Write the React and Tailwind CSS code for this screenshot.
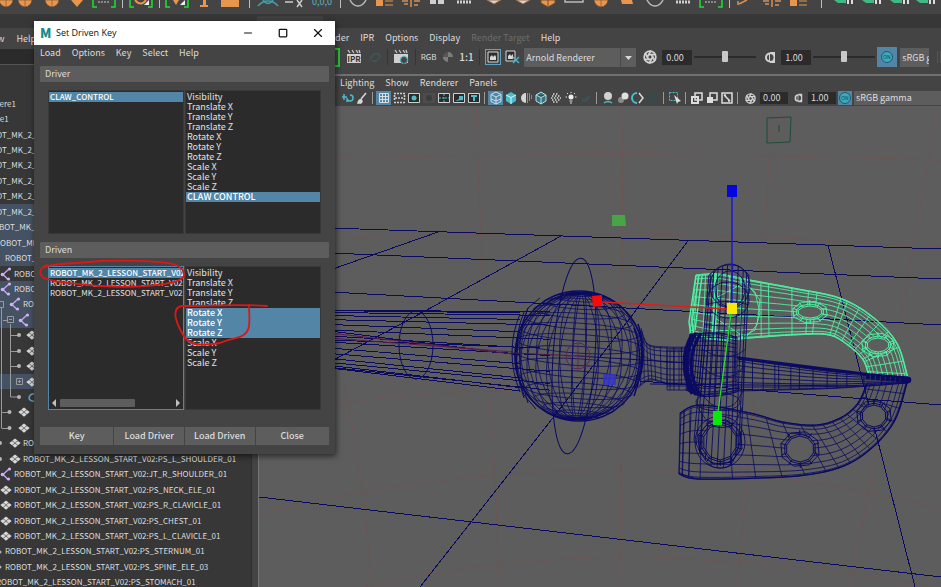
import React from 'react';
import { Aperture, X, Square, Minus } from 'lucide-react';

const attrs = ['Visibility', 'Translate X', 'Translate Y', 'Translate Z', 'Rotate X', 'Rotate Y', 'Rotate Z', 'Scale X', 'Scale Y', 'Scale Z'];

const prefix = 'ROBOT_MK_2_LESSON_START_V02:';

const outlinerRows = [
  { text: 'pSphere1', pad: '-ml-[20px]' },
  { text: 'Cube1', pad: '-ml-[15px]' },
  { text: 'ROBOT_MK_2_', pad: '-ml-[20px]' },
  { text: 'ROBOT_MK_2_', pad: '-ml-[20px]' },
  { text: 'ROBOT_MK_2_', pad: '-ml-[20px]' },
  { text: 'ROBOT_MK_2_', pad: '-ml-[20px]' },
  { text: 'ROBOT_MK_2_', pad: '-ml-[20px]' },
  { text: 'ROBOT_MK_2_', pad: '-ml-[20px]', on: true },
  { text: 'ROBOT_MK_', pad: '-ml-[12px]', on: true },
  { text: 'ROBOT_MK', pad: '-ml-[5px]', on: true },
  { text: 'ROBOT_', pad: 'pl-[5px]', on: true },
  { text: 'ROBOT', pad: 'pl-0', icon: 'joint' },
  { text: 'ROBOT', pad: 'pl-0', icon: 'joint', on: true },
  { text: 'ROB', pad: 'pl-[9px]', icon: 'joint', on: true },
  { text: '', pad: 'pl-[18px]', icon: 'joint', on: true },
  { text: '', pad: 'pl-[26px]', icon: 'mesh' },
  { text: '', pad: 'pl-[26px]', icon: 'mesh' },
  { text: '', pad: 'pl-[26px]', icon: 'mesh' },
  { text: '', pad: 'pl-[26px]', icon: 'mesh', on: true },
  { text: '', pad: 'pl-[26px]', icon: 'curve' },
  { text: '', pad: 'pl-[18px]', icon: 'mesh' },
  { text: '', pad: 'pl-[18px]', icon: 'mesh' },
  { text: 'ROB', pad: 'pl-[9px]', icon: 'mesh' },
  { text: prefix + 'PS_L_SHOULDER_01', pad: 'pl-[9px]', icon: 'mesh' },
  { text: prefix + 'JT_R_SHOULDER_01', pad: 'pl-0', icon: 'joint' },
  { text: prefix + 'PS_NECK_ELE_01', pad: 'pl-0', icon: 'mesh' },
  { text: prefix + 'PS_R_CLAVICLE_01', pad: 'pl-0', icon: 'mesh' },
  { text: prefix + 'PS_CHEST_01', pad: 'pl-0', icon: 'mesh' },
  { text: prefix + 'PS_L_CLAVICLE_01', pad: 'pl-0', icon: 'mesh' },
  { text: prefix + 'PS_STERNUM_01', pad: 'pl-[5px]' },
  { text: prefix + 'PS_SPINE_ELE_03', pad: 'pl-[5px]' },
  { text: prefix + 'PS_STOMACH_01', pad: '-ml-[4px]' },
];

function NodeIcon({ kind }) {
  if (kind === 'joint') {
    return (
      <svg width="12" height="14" viewBox="0 0 12 14" className="shrink-0">
        <path d="M9 2L3 7.5l5 5" fill="none" stroke="#c3a6ef" strokeWidth="1.4" />
        <circle cx="9.500" cy="2" r="1.600" fill="#cdb4f5" />
        <circle cx="2.500" cy="7.500" r="1.800" fill="#cdb4f5" />
        <circle cx="8.500" cy="12" r="1.600" fill="#cdb4f5" />
      </svg>
    );
  }
  if (kind === 'curve') {
    return (
      <svg width="12" height="14" viewBox="0 0 12 14" className="shrink-0">
        <path d="M10 4C5 3 3 6 3 8s3 4 8 3" fill="none" stroke="#5aa7c8" strokeWidth="1.5" />
      </svg>
    );
  }
  return (
    <svg width="12" height="14" viewBox="0 0 12 14" className="shrink-0">
      <path d="M6 2.500l2.700 2.100L6 6.700 3.300 4.600zM3 5l2.700 2.100L3 9.200.300 7.100zM9 5l2.700 2.100L9 9.200 6.300 7.100zM6 7.500l2.700 2.100L6 11.700 3.300 9.600z" fill="#d8d8d8" />
    </svg>
  );
}

function TreeLines() {
  return (
    <svg width="34" height="494" viewBox="0 96 34 494" className="absolute left-0 top-0 pointer-events-none">
      <g fill="none" stroke="#9a9a9a">
        <path d="M1.500 308v120M1.500 412.500h8M1.500 428.500h8M10.500 324v73h8M10.500 335.500h8M10.500 351.500h8M10.500 366.500h8M3 320.500h4" />
        <path d="M-2.500 301.500h6v6h-6zM7.500 316.500h6v6h-6zM16.500 378.500h6v6h-6zM9 319.500h3M18 381.500h3M19.500 380v3" />
      </g>
      <g fill="#b5b5b5">
        {[335, 351, 366, 397].map((y) => <circle key={y} cx="19" cy={y} r="2" />)}
        <circle cx="9.500" cy="412" r="2" />
        <circle cx="9.500" cy="428" r="2" />
        <circle cx="0" cy="443" r="2" />
        <circle cx="0" cy="459" r="2" />
        <circle cx="0" cy="567" r="1.500" />
        <circle cx="0" cy="552" r="1.500" />
      </g>
    </svg>
  );
}

function Outliner() {
  return (
    <aside className="w-[259px] shrink-0 flex bg-[#373737] overflow-hidden">
      <div className="flex-1 min-w-0 flex flex-col">
        <nav className="h-[21px] shrink-0 flex items-center gap-3 bg-[#444444] text-[9px] leading-[12px] -ml-[19px]">
          <a href="#show">Show</a>
          <a href="#help">Help</a>
        </nav>
        <div className="h-[15px] shrink-0 bg-[#2b2b2b]" />
        <div className="h-[32px] shrink-0 border-t border-[#555555] bg-[#373737]" />
        <div className="relative shrink-0">
          <ul className="grid auto-rows-fr h-[494px] text-[8px] leading-[14px] text-[#dedede]">
            {outlinerRows.map((row, i) => (
              <li key={i} className={row.on ? 'flex items-center bg-[#455263]' : 'flex items-center'}>
                <span className={'flex items-center gap-[2px] whitespace-nowrap ' + row.pad}>
                  {row.icon && <NodeIcon kind={row.icon} />}
                  {row.text}
                </span>
              </li>
            ))}
          </ul>
          <TreeLines />
        </div>
      </div>
      <div className="w-2 border-l border-[#2f2f2f] border-r border-r-[#777777] bg-[#444444]" />
    </aside>
  );
}

// shelf along the top edge, only the lower part of each icon is in view
const shelf = [
  ['w-[12px]', 'ball'], ['w-[26px]', 'ball'], ['w-[27px]', 'ball'], ['w-[24px]', 'diamond'],
  ['w-[30px]', 'bracket'], ['w-[7px]', 'sep'], ['w-[30px]', 'bracketBall'], ['w-[6px]', 'sep'],
  ['w-[30px]', 'bracketTri'], ['w-[24px]', 'tee'], ['w-[28px]', 'plate'], ['w-[11px]', 'sep'],
  ['w-[25px]', 'arc'], ['w-[27px]', 'cross'], ['w-[29px]', 'coords'], ['w-[8px]', 'sep'],
  ['w-[28px]', 'ring'], ['w-[26px]', 'align'], ['w-[26px]', 'split'], ['w-[26px]', 'blocks'],
  ['w-[28px]', 'dots'], ['w-[30px]', 'layers'], ['w-[28px]', 'layers'], ['w-[24px]', 'cube'],
  ['w-[28px]', 'frame'], ['w-[26px]', 'ball'], ['w-[26px]', 'sheet'], ['w-[30px]', 'ring'],
  ['w-[26px]', 'dots'], ['w-[30px]', 'bracket'], ['w-[6px]', 'sep'], ['w-[26px]', 'tri'],
  ['w-[28px]', 'split'], ['w-[26px]', 'align'], ['w-[18px]', 'sep'], ['w-[28px]', 'green'],
  ['w-[28px]', 'green'], ['w-[27px]', 'green'], ['w-[26px]', 'green'], ['w-[28px]', 'green'],
];

const shelfArt = {
  ball: <path d="M5 0h14q-1 6-7 7-6-1-7-7zM12 0v7" fill="#e8964e" stroke="#6b4a30" strokeWidth=".6" />,
  diamond: <path d="M6 0h12l-6 7z" fill="#e8964e" />,
  bracket: <g><path d="M1 0v7h4M23 0v7h-4" fill="none" stroke="#22dd35" strokeWidth="1.500" /><path d="M6 2h12" stroke="#cccccc" strokeDasharray="2 1" /></g>,
  bracketBall: <g><path d="M1 0v7h4M23 0v7h-4" fill="none" stroke="#22dd35" strokeWidth="1.500" /><path d="M6 0q6 7 11 0" fill="none" stroke="#e8964e" strokeWidth="2" /><path d="M20 0v5h-5z" fill="#eeeeee" /></g>,
  bracketTri: <g><path d="M1 0v7h4M23 0v7h-4" fill="none" stroke="#22dd35" strokeWidth="1.500" /><path d="M8 0l3 5 3-5z" fill="#e8964e" /><path d="M20 0v5h-5z" fill="#eeeeee" /></g>,
  tee: <path d="M11 0h3v5h2v2H8V5h3z" fill="#e8964e" />,
  plate: <path d="M3 0h18v7H3z" fill="#e8964e" />,
  arc: <path d="M2 6q4-5 10-5t10 5M7 0q5 7 10 0" fill="none" stroke="#3f9fa6" strokeWidth="1.500" />,
  cross: <path d="M3 2h8M15 0l5 7M20 0l-5 7" fill="none" stroke="#cccccc" strokeWidth="1.500" />,
  coords: <text x="2" y="5" fontSize="9" fill="#5cb8cc">0,0,0</text>,
  ring: <path d="M4 0q3 6 8 6t8-6" fill="none" stroke="#b9b9b9" strokeWidth="1.500" />,
  align: <g><path d="M3 0h7v6H3z" fill="#e8964e" /><path d="M12 1h8M12 5h8" stroke="#e8964e" /></g>,
  split: <path d="M3 1h6M15 1h6M5 4h4M15 5h4M12 0v7" stroke="#d89058" strokeWidth="1.500" />,
  blocks: <path d="M5 0h6v4H5zM13 0h6v4h-6z" fill="#cfcfcf" />,
  dots: <path d="M5 2h14" stroke="#cfcfcf" strokeWidth="3" strokeDasharray="2 1" />,
  layers: <path d="M6 0l7 4 7-4z" fill="#d5d5d5" stroke="#9b6b45" />,
  cube: <path d="M5 0v3l7 4 7-4V0zM12 0v7" fill="#e8964e" stroke="#75502f" />,
  sheet: <path d="M6 0h11l1 4H7z" fill="#e8964e" />,
  frame: <path d="M3 0v2h18V0" fill="none" stroke="#b9b9b9" strokeWidth="1.500" />,
  tri: <path d="M5 5V1M6 4l8-4" stroke="#d89058" strokeWidth="1.500" />,
  green: <g><path d="M2 0h12v3H6z" fill="#42b883" /><path d="M15 1h8M15 3h8" stroke="#dddddd" strokeWidth="2" strokeDasharray="2 2" /></g>,
};

function Shelf() {
  return (
    <div className="h-[14px] shrink-0 flex bg-[#444444] overflow-hidden">
      {shelf.map(([w, kind], i) =>
        kind === 'sep' ? (
          <span key={i} className={'shrink-0 flex justify-center ' + w}>
            <i className="w-px h-2 bg-[#bdbdbd]" />
          </span>
        ) : (
          <button key={i} type="button" aria-label={kind} className={'shrink-0 flex justify-center ' + w}>
            <svg width="24" height="8" viewBox="0 0 24 8" className="shrink-0">{shelfArt[kind]}</svg>
          </button>
        )
      )}
    </div>
  );
}

function Clapper({ children }) {
  return (
    <svg width="16" height="16" viewBox="0 0 16 16">
      <path d="M2 1l2 3M6 1l2 3M10 1l2 3M13 1l1 3" stroke="#c8c8c8" strokeWidth="1.300" />
      <path d="M1 5h14v9H1z" fill="#d0d0d0" />
      {children}
    </svg>
  );
}

function Slider({ label }) {
  return (
    <input
      type="range"
      aria-label={label}
      defaultValue="50"
      className="w-[62px] h-4 appearance-none bg-transparent [&::-webkit-slider-runnable-track]:h-[2px] [&::-webkit-slider-runnable-track]:bg-[#2b2b2b] [&::-webkit-slider-thumb]:appearance-none [&::-webkit-slider-thumb]:w-[6px] [&::-webkit-slider-thumb]:h-[11px] [&::-webkit-slider-thumb]:-mt-[5px] [&::-webkit-slider-thumb]:bg-[#c8c8c8] [&::-webkit-slider-thumb]:rounded-[1px]"
    />
  );
}

function ColorManaged({ size }) {
  return (
    <svg width={size} height={size} viewBox="0 0 14 14">
      <circle cx="7" cy="7" r="5.500" fill="#41a9b5" stroke="#1d5a70" />
      <text x="7" y="9" fontSize="5" textAnchor="middle" fill="#123f50">ON</text>
    </svg>
  );
}

function HalfDisc({ size }) {
  return (
    <svg width={size} height={size} viewBox="0 0 13 13" className="shrink-0">
      <path d="M7 1h5v11H7z" fill="#d2d2d2" />
      <path d="M7 2.500a4 4 0 0 0 0 8z" fill="none" stroke="#d2d2d2" strokeWidth="2" />
      <path d="M7 3a3.500 3.500 0 0 1 0 7z" fill="#444444" />
    </svg>
  );
}

function Sep() {
  return <span className="w-px h-4 bg-[#353535]" />;
}

function RenderView() {
  return (
    <div className="shrink-0 h-[48px] flex flex-col border-b-2 border-[#707070]">
      <nav className="h-[19px] shrink-0 flex items-center gap-[11px] pl-[60px] text-[9px] leading-[12px]">
        <a href="#render">Render</a>
        <a href="#ipr">IPR</a>
        <a href="#options">Options</a>
        <a href="#display">Display</a>
        <a href="#target" className="text-[#6c6c6c]">Render Target</a>
        <a href="#rhelp">Help</a>
      </nav>
      <div className="flex items-center h-[20px] pl-[75px]">
        <span className="w-[7px] h-[19px] border-2 border-l-0 border-[#22cc33]" />
        <div className="flex items-center w-[183px] justify-between pl-[6px]">
          <button type="button" aria-label="IPR render"><Clapper><text x="8" y="13" fontSize="8" fontWeight="bold" textAnchor="middle" fill="#333333">IPR</text></Clapper></button>
          <button type="button" aria-label="Refresh IPR">
            <svg width="14" height="14" viewBox="0 0 14 14"><path d="M2 10q3-8 8-6t-2 7M4 11h5" fill="none" stroke="#3d5354" strokeWidth="2" /></svg>
          </button>
          <Sep />
          <button type="button" aria-label="Render settings">
            <Clapper><circle cx="11" cy="11" r="3.500" fill="#444444" stroke="#3fb0bf" strokeWidth="1.500" strokeDasharray="2 1" /></Clapper>
          </button>
          <Sep />
          <button type="button" className="text-[8px] leading-[10px]">RGB</button>
          <button type="button" aria-label="Alpha">
            <svg width="12" height="12" viewBox="0 0 12 12"><path d="M6 1a5 5 0 0 1 5 5H6zM6 6v5a5 5 0 0 1-5-5z" fill="#7d7d7d" /><path d="M6 1v5H1a5 5 0 0 1 5-5z" fill="#555555" /></svg>
          </button>
          <button type="button" className="text-[10px] leading-[12px] font-medium">1:1</button>
          <Sep />
          <button type="button" aria-label="Keep image" className="border border-[#5ba5c0] p-px">
            <svg width="12" height="12" viewBox="0 0 12 12"><path d="M1 1h10v10H1z" fill="#2d2d2d" stroke="#d8d8d8" /><path d="M3 9V6l2-2 1 2 2-2 1 2v3z" fill="#d8d8d8" /></svg>
          </button>
        </div>
        <button type="button" aria-label="Remove image" className="mx-[4px]">
          <svg width="15" height="14" viewBox="0 0 15 14"><path d="M1 1h9v10H1z" fill="#2d2d2d" stroke="#d8d8d8" /><path d="M3 9V6l2-2 1 2 2-2v5z" fill="#d8d8d8" /><path d="M8 7l6 6M14 7l-6 6" stroke="#45b3c4" strokeWidth="1.500" /></svg>
        </button>
        <div className="relative w-[112px] h-[19px] shrink-0">
          <select aria-label="Renderer" className="block appearance-none w-full h-full bg-[#5d5d5d] px-[2px] text-[9px] leading-[19px]">
            <option>Arnold Renderer</option>
          </select>
          <svg width="16" height="19" viewBox="0 0 16 19" className="absolute right-0 top-0 pointer-events-none"><path d="M.5 0v19" stroke="#4a4a4a" /><path d="M5 8h7l-3.500 4z" fill="#d8d8d8" /></svg>
        </div>
        <Aperture size={14} className="ml-[7px] shrink-0 text-[#d2d2d2]" strokeWidth={3} />
        <input aria-label="Exposure" defaultValue="0.00" className="w-[30px] h-[15px] ml-[5px] pl-[4px] bg-[#2b2b2b] text-[9px] leading-[15px]" />
        <span className="mx-[2px] flex"><Slider label="Exposure slider" /></span>
        <span className="ml-[5px]"><HalfDisc size={13} /></span>
        <input aria-label="Gamma" defaultValue="1.00" className="w-[30px] h-[15px] ml-[5px] pl-[4px] bg-[#2b2b2b] text-[9px] leading-[15px]" />
        <span className="mx-[2px] flex"><Slider label="Gamma slider" /></span>
        <button type="button" aria-label="Color management" className="w-5 h-5 shrink-0 bg-[#5285a6] flex items-center justify-center"><ColorManaged size={14} /></button>
        <input aria-label="View transform" defaultValue="sRGB gamma" className="w-[29px] h-[19px] ml-[3px] pl-[2px] bg-[#5d5d5d] text-[9px] leading-[19px]" />
        <span className="ml-2 h-3 w-1 border-x border-[#555555]" />
      </div>
    </div>
  );
}

const teal = '#4bbccb';

const tools = [
  { n: 'Pan', art: <path d="M2 6h5M4 3v6M7 7a3 3 0 1 0 3-3M6 10h4" fill="none" stroke={teal} strokeWidth="1.500" /> },
  { n: 'Grease pencil', art: <path d="M11 2L6 8M3 12q1-4 3-3t0 3z" stroke="#d8d8d8" strokeWidth="1.500" fill="#d8d8d8" /> },
  'sep',
  { n: 'Grid', on: true, art: <path d="M2.500 2.500h9v9h-9zM5.500 2v10M8.500 2v10M2 5.500h10M2 8.500h10" fill="none" stroke="#dddddd" /> },
  { n: 'Film gate', art: <path d="M2 2.500h11M2 11.500h11M2.500 4v6M12.500 4v6M3 7h9" fill="none" stroke="#d0d0d0" strokeWidth="1.500" strokeDasharray="2 1" /> },
  { n: 'Resolution gate', art: <g><path d="M1.500 2.500h11v9h-11z" fill="#2b2b2b" stroke="#d0d0d0" /><circle cx="7" cy="7" r="2.500" fill={teal} /></g> },
  { n: 'Gate mask', art: <g><path d="M1 2h12v10H1z" fill="#4c4c4c" /><circle cx="7" cy="7" r="3" fill="#3c3c3c" /></g> },
  { n: 'Field chart', art: <g><path d="M1.500 2.500h11v9h-11z" fill="#2b2b2b" stroke="#d0d0d0" /><path d="M7 3v8M2 7h10" stroke={teal} strokeDasharray="2 1" /></g> },
  { n: 'Safe action', art: <g><path d="M1.500 2.500h11v9h-11z" fill="#2b2b2b" stroke="#d0d0d0" /><path d="M3 10l4-2V5h4v4z" fill={teal} /></g> },
  { n: 'Safe title', art: <g><path d="M1.500 2.500h11v9h-11z" fill="#2b2b2b" stroke="#d0d0d0" /><path d="M4 5h6M7 5v5" stroke={teal} strokeWidth="2" /></g> },
  'sep',
  { n: 'Wireframe', on: true, art: <path d="M7 1l5 2.500v7L7 13l-5-2.500v-7zM2 3.500L7 6l5-2.500M7 6v7M2 8l5 2 5-2" fill="none" stroke="#c8e4ee" /> },
  { n: 'Shaded', art: <g><path d="M7 1l5 3v6l-5 3-5-3V4z" fill={teal} /><path d="M2 4l5 2.500L12 4M7 6.500V13" fill="none" stroke="#d8f5f8" /></g> },
  { n: 'Default material', art: <g><path d="M7 2a5 5 0 0 0 0 10z" fill="#d5d5d5" /><path d="M8 3h4M8 5h5M8 7h5M8 9h4M8 11h2" stroke="#d5d5d5" strokeDasharray="1 1" /></g> },
  { n: 'Wireframe on shaded', art: <path d="M7 1l5 3v6l-5 3-5-3V4zM2 4l5 2.500L12 4M7 6.500V13" fill="#327580" stroke="#b8dfe4" /> },
  { n: 'Textured', art: <path d="M4 3h6M3 5h8M2 7h10M3 9h8M4 11h6" stroke="#d5d5d5" strokeWidth="1.500" strokeDasharray="1.500 1.500" /> },
  { n: 'Lights', art: <g><circle cx="7" cy="6" r="2.500" fill="#eeeeee" /><path d="M5.500 10h3M6 12h2M7 1v1M1.500 6H3M11 6h1.500M3 2l1 1M11 2l-1 1" stroke="#dddddd" /></g> },
  { n: 'Shadows', art: <path d="M3 9q4 2 7-4" fill="none" stroke="#355556" strokeWidth="3" /> },
  'sep',
  { n: 'Occlusion', art: <g><circle cx="7" cy="5" r="4" fill="#d0d0d0" /><path d="M3 12q4-3 8 0" stroke={teal} fill="none" strokeWidth="1.500" /></g> },
  { n: 'Motion blur', art: <g><circle cx="5" cy="9" r="3" fill="#8a8a8a" /><circle cx="9" cy="5" r="3.500" fill="#e0e0e0" /></g> },
  { n: 'Multisample', art: <g><path d="M6 2a5 5 0 0 0 0 10" fill="none" stroke={teal} strokeWidth="2" /><path d="M8 2l4 5-4 5" fill="none" stroke="#dddddd" strokeWidth="1.500" /></g> },
  { n: 'Depth of field', art: <path d="M2 2h10v10H2z" fill="#39494a" /> },
  'sep',
  { n: 'Isolate', art: <g><path d="M1.500 1.500h8v8h-8z" fill="none" stroke={teal} strokeDasharray="2 1" /><path d="M6 4l7 6-3 1-1 2z" fill="#e0e0e0" /></g> },
  'sep',
  { n: 'X-ray', art: <g><path d="M5 2h7v7H5z" fill="#444444" stroke="#dddddd" strokeWidth="1.500" /><path d="M2 6h6v6H2z" fill="none" stroke="#dddddd" strokeWidth="2" /></g> },
  { n: 'X-ray joints', art: <g><path d="M5 2h7v7H5z" fill="#444444" stroke="#dddddd" strokeWidth="1.500" /><path d="M2 6h6v6H2z" fill="#dddddd" /></g> },
  { n: 'X-ray components', art: <path d="M2 2h10v10H2zM4 4l6 6M4 4h2M10 10H8" fill="none" stroke="#dddddd" strokeWidth="1.500" /> },
  'sep',
];

function ViewportTools() {
  return (
    <div className="h-[16px] shrink-0 flex items-center pl-[80px]">
      {tools.map((t, i) =>
        t === 'sep' ? (
          <span key={i} className="w-[7px] shrink-0 flex justify-center"><i className="w-px h-3 bg-[#999999]" /></span>
        ) : (
          <button key={i} type="button" aria-label={t.n} className={t.on ? 'w-[15px] shrink-0 flex justify-center bg-[#5285a6]' : 'w-[15px] shrink-0 flex justify-center'}>
            <svg width="14" height="14" viewBox="0 0 14 14">{t.art}</svg>
          </button>
        )
      )}
      <Aperture size={11} className="ml-[4px] shrink-0 text-[#d2d2d2]" strokeWidth={3} />
      <input aria-label="View exposure" defaultValue="0.00" className="w-[28px] h-[12px] ml-[4px] pl-[3px] bg-[#2b2b2b] text-[9px] leading-[12px]" />
      <span className="ml-[5px]"><HalfDisc size={10} /></span>
      <input aria-label="View gamma" defaultValue="1.00" className="w-[28px] h-[12px] ml-[5px] pl-[3px] bg-[#2b2b2b] text-[9px] leading-[12px]" />
      <button type="button" aria-label="View color management" className="w-[14px] h-[14px] ml-[2px] shrink-0 bg-[#5285a6]"><ColorManaged size={14} /></button>
      <input aria-label="View color space" defaultValue="sRGB gamma" className="flex-1 min-w-0 h-[14px] ml-[2px] pl-[2px] bg-[#5d5d5d] text-[9px] leading-[14px]" />
    </div>
  );
}

// ---- wireframe helpers ----

function sample(pts, n) {
  const out = [];
  const last = pts.length - 1;
  for (let k = 0; k <= n; k++) {
    const u = (k / n) * last;
    const i = Math.min(Math.floor(u), last - 1);
    const t = u - i;
    const p0 = pts[Math.max(i - 1, 0)];
    const p1 = pts[i];
    const p2 = pts[i + 1];
    const p3 = pts[Math.min(i + 2, last)];
    out.push([0, 1].map((a) =>
      0.5 * (2 * p1[a] + (p2[a] - p0[a]) * t + (2 * p0[a] - 5 * p1[a] + 4 * p2[a] - p3[a]) * t * t + (3 * p1[a] - p0[a] - 3 * p2[a] + p3[a]) * t * t * t)
    ));
  }
  return out;
}

const toPath = (pts) => 'M' + pts.map((p) => p[0].toFixed(1) + ' ' + p[1].toFixed(1)).join('L');

function mesh(top, bottom, rows, cols, n = 40) {
  const a = sample(top, n);
  const b = sample(bottom, n);
  const at = (i, t) => [a[i][0] + (b[i][0] - a[i][0]) * t, a[i][1] + (b[i][1] - a[i][1]) * t];
  let d = '';
  rows.forEach((t) => { d += toPath(a.map((_, i) => at(i, t))); });
  cols.forEach((c) => { d += toPath([at(c, 0), at(c, 1)]); });
  return d;
}

function polygon(cx, cy, rx, ry, n) {
  const pts = [];
  for (let i = 0; i <= n; i++) {
    const a = (i / n) * Math.PI * 2 + 0.3;
    pts.push([cx + rx * Math.cos(a), cy + ry * Math.sin(a)]);
  }
  return toPath(pts);
}

function Hole({ cx, cy, rx, ry, color }) {
  let d = polygon(cx, cy, rx, ry, 10) + polygon(cx, cy, rx + 2, ry + 2, 10) + polygon(cx, cy, rx + 6, ry + 5, 8);
  for (let i = 0; i < 10; i++) {
    const a = (i / 10) * Math.PI * 2 + 0.3;
    d += toPath([[cx + rx * Math.cos(a), cy + ry * Math.sin(a)], [cx + (rx + 6) * Math.cos(a), cy + (ry + 6) * Math.sin(a)]]);
  }
  return <g><path d={polygon(cx, cy, rx + 1, ry + 1, 10)} fill="#5d5d5d" /><path d={d} fill="none" stroke={color} /></g>;
}

function armLines() {
  let d = '';
  for (let i = 0; i <= 15; i++) {
    const t = (1 - Math.cos((i / 15) * Math.PI)) / 2;
    d += toPath([[330, 310 + t * 58], [i % 2 ? 520 : 550, 312 + t * 79]]);
  }
  d += 'M330 331L520 355M330 340L540 348';
  return d;
}

function ballLines() {
  const [cx, cy, r] = [579, 356, 64];
  let d = '';
  for (let i = 0; i < 15; i++) {
    const lon = (i / 15) * Math.PI;
    const pts = [];
    for (let k = 0; k <= 36; k++) {
      const a = (k / 36) * Math.PI * 2;
      const x = Math.sin(a) * Math.cos(lon);
      const z = Math.sin(a) * Math.sin(lon);
      const y = Math.cos(a) * 0.98 + z * 0.2;
      pts.push([cx + r * (x + y * -0.04), cy + r * y]);
    }
    d += toPath(pts);
  }
  for (let i = 1; i < 16; i++) {
    const lat = (i / 16) * Math.PI;
    const pts = [];
    for (let k = 0; k <= 36; k++) {
      const a = (k / 36) * Math.PI * 2;
      const x = Math.sin(lat) * Math.cos(a);
      const y = Math.cos(lat) * 0.98 + Math.sin(lat) * Math.sin(a) * 0.15;
      pts.push([cx + r * x, cy + r * y + x * 4]);
    }
    d += toPath(pts);
  }
  return d;
}

const ts = (n) => Array.from({ length: n + 1 }, (_, i) => (1 - Math.cos((i / n) * Math.PI)) / 2);

const clawTop = [[696, 275], [718, 274], [750, 280], [793, 288], [840, 298], [873, 317], [897, 343], [908, 378]];
const clawTopIn = [[690, 334], [718, 340], [750, 338], [793, 335], [829, 335], [850, 347], [863, 360], [868, 373]];
const clawLow = [[679, 474], [698, 479], [760, 478], [806, 475], [844, 466], [873, 447], [895, 420], [907, 383]];
const clawLowIn = [[680, 413], [700, 405], [750, 413], [783, 422], [817, 425], [842, 417], [858, 403], [867, 383]];

function Scene() {
  const navy = '#0a0a62';
  const green = '#4df2a4';
  return (
    <svg width="100%" height="100%" viewBox="259 106 682 481" preserveAspectRatio="xMinYMin slice" className="block">
      <g fill="none" stroke="#6c5656" strokeWidth="1">
        <path d="M336 158Q630 150 941 160M336 240Q600 224 941 247M336 404Q420 392 520 390M259 514Q430 472 620 469Q800 470 941 510M365 587Q480 560 620 557Q800 560 941 590" />
        <path d="M476 106Q482 300 495 470L499 587M623 106L622 300L620 587M772 106Q760 350 738 587M938 106L911 260Q880 440 850 587M345 383L364 500L372 587" />
      </g>
      <g fill="none" stroke={navy} shapeRendering="crispEdges">
        <path d="M330 228L941 249M330 253L941 279M330 292L941 325M640 381L941 405M259 497L941 577" />
        <path d="M438 232L330 270M561 236L425 311L330 362M688 241L634 313L552 419L420 587M828 245L915 587" />
        <path d={armLines()} />
      </g>
      <g fill="none" stroke={navy}>
        <ellipse cx="416" cy="345" rx="17" ry="34" />
        <ellipse cx="574" cy="356" rx="21" ry="98" transform="rotate(4 574 356)" />
      </g>
      <path d="M330 338L513 352M330 333L513 354" stroke="#5a1f4c" fill="none" />
      <g fill="none" stroke={navy}>
        <path d={ballLines()} strokeWidth=".8" />
        <ellipse cx="579" cy="356" rx="64" ry="65" strokeWidth="1.500" />
        <path d="M520 314Q504 352 520 392M524 312Q508 352 524 398M528 308Q511 352 528 403M540 298L528 308L518 335L516 370L524 395L536 409" />
        <path d="M634 328Q645 355 634 388M638 324Q649 355 634 396" strokeWidth="1.500" />
        <path d={mesh([[641, 328], [648, 344], [668, 347], [690, 347]], [[638, 388], [650, 380], [668, 384], [690, 384]], ts(9), [4, 8, 12, 15, 18, 22, 26, 30, 34, 38])} strokeWidth=".8" />
        <path d="M667 350h24v40h-24zM670 350v40M674 350v40M679 350v40M667 386h24" strokeWidth=".8" />
      </g>
      <path d="M513 353L578 356" stroke="#4b1748" />
      <path d="M578 356L690 363M650 384L860 386" stroke={navy} />
      <ellipse cx="578" cy="356" rx="12" ry="13" fill="none" stroke="#5a2452" />
      <path d="M567 356h22M578 344v25" stroke="#5a2452" />

      <g fill="none" stroke={green} strokeWidth=".9">
        <path d={mesh(clawTop, clawTopIn, ts(12), [0, 1, 3, 5, 8, 10, 13, 14, 17, 19, 20, 23, 24, 26, 28, 30, 32, 34, 35, 37, 39, 40])} />
        <path d="M696 275L689 322L691 336M699 275L692 322L694 338M716 274L712 338M718 273L715 338M702 276L695 330" strokeWidth="1.500" />
        <path d="M740 280L755 292L760 313L755 330L740 338M745 281L760 300L757 325L745 338M715 318L740 334M712 300L740 285" />
        <path d={toPath(sample(clawTop, 40))} />
        <path d={toPath(sample(clawTopIn, 40))} />
      </g>
      <Hole cx={810} cy={312} rx={12} ry={6} color={green} />
      <Hole cx={878} cy={345} rx={11} ry={7} color={green} />

      <g fill="none" stroke={navy} strokeWidth=".8">
        <path d={mesh(clawLow, clawLowIn, ts(10), [0, 2, 4, 6, 9, 11, 14, 17, 20, 22, 24, 26, 28, 30, 32, 34, 36, 38, 40])} />
        <path d={toPath(sample(clawLow, 40))} strokeWidth="1.300" />
        <path d={toPath(sample(clawLowIn, 40))} strokeWidth="1.200" />
        <path d="M681 413L679 474L698 479M684 411L682 474M690 410L689 475" />
      </g>
      <Hole cx={800} cy={449} rx={14} ry={13} color={navy} />
      <Hole cx={874} cy={416} rx={12} ry={11} color={navy} />
      <Hole cx={720} cy={442} rx={17} ry={18} color={navy} />

      <g fill="none" stroke={navy} strokeWidth=".9">
        <ellipse cx="730" cy="286" rx="20" ry="22" />
        <ellipse cx="730" cy="289" rx="15" ry="18" />
        <ellipse cx="728" cy="300" rx="21" ry="18" />
        <path d={mesh([[709, 275], [722, 266], [738, 266], [749, 275]], [[694, 440], [710, 465], [730, 465], [741, 440]], [0, .18, .3, .45, .55, .7, .8, 1], [0, 3, 6, 10, 14, 18, 22, 27, 32, 36, 40])} />
        <path d={mesh([[690, 334], [705, 333], [720, 333], [737, 337]], [[686, 390], [700, 396], [718, 396], [737, 392]], ts(17), [0, 2, 4, 6, 8, 10, 12, 14, 17, 20, 24, 28, 32, 36, 38, 40])} />
        <path d="M692 334Q676 362 692 394M696 333Q678 362 696 395M701 333Q682 362 700 396" strokeWidth="3" />
        <ellipse cx="720" cy="442" rx="21" ry="22" />
        <ellipse cx="720" cy="442" rx="25" ry="26" />
        <ellipse cx="718" cy="402" rx="22" ry="9" />
        <path d={mesh([[737, 357], [780, 364], [840, 372], [908, 377]], [[737, 391], [780, 390], [840, 388], [908, 383]], ts(9), [3, 6, 9, 12, 13, 16, 18, 21, 24, 26, 28, 31, 34, 37])} />
        <path d="M737 357L870 374L910 378M738 359L870 375" strokeWidth="1.500" />
        <path d="M866 376L908 380" strokeWidth="6" strokeDasharray="4 1" />
        <circle cx="908" cy="380" r="3" fill={navy} />
      </g>

      <path d="M767 118l24-1-1 25-23 1z" fill="none" stroke="#1e4c38" />
      <path d="M779 125v7" stroke="#1e4c38" />
      <path d="M612 215h13l1 11h-14z" fill="#47a447" />
      <path d="M603 374h13v11h-13z" fill="#3434d0" opacity=".8" />
      <path d="M732 197v107" stroke="#1818d8" strokeWidth="1.500" />
      <path d="M727 185h10v12h-10z" fill="#0505dd" />
      <path d="M602 302L727 309" stroke="#e01d1d" strokeWidth="1.300" />
      <path d="M592 296l10-1v11l-9 1z" fill="#fb0808" />
      <path d="M731 314L718 412" stroke="#22e022" strokeWidth="1.300" />
      <path d="M727 303h10v11h-10z" fill="#f5e808" />
      <path d="M713 411h9v14h-9z" fill="#08e808" />
    </svg>
  );
}

function Listbox({ label, items, selected, focused, nodes }) {
  return (
    <div className={'flex-1 min-w-0 flex flex-col bg-[#2b2b2b] border ' + (focused ? 'border-[#5285a6]' : 'border-[#383838]')}>
      <ul role="listbox" aria-label={label} className={'flex-1 pt-px overflow-hidden leading-[10px] text-[#e2e2e2] ' + (nodes ? 'text-[8px]' : 'text-[9px]')}>
        {items.map((item, i) => {
          const on = selected.includes(i);
          return (
            <li key={i} role="option" aria-selected={on} className={'h-[10px] pl-px whitespace-nowrap ' + (on ? 'bg-[#5285a6] text-white font-medium' : '')}>
              {item}
            </li>
          );
        })}
      </ul>
      {focused && (
        <div className="h-[10px] mb-px flex items-center justify-between px-[2px]">
          <svg width="6" height="8" viewBox="0 0 6 8"><path d="M5 0v8L1 4z" fill="#c0c0c0" /></svg>
          <span className="flex-1 mx-[3px]"><i className="block w-2/3 h-2 bg-[#5d5d5d] rounded-[1px]" /></span>
          <svg width="6" height="8" viewBox="0 0 6 8"><path d="M1 0v8l4-4z" fill="#c0c0c0" /></svg>
        </div>
      )}
    </div>
  );
}

function Section({ title, children }) {
  return (
    <section>
      <h2 className="h-[16px] px-[5px] bg-[#5d5d5d] rounded-[1px] text-[9px] leading-[16px]">{title}</h2>
      <div className="flex gap-px h-[144px] mt-2 mx-2">{children}</div>
    </section>
  );
}

function DrivenKeyDialog() {
  const node = 'ROBOT_MK_2_LESSON_START_V02:';
  return (
    <div role="dialog" aria-label="Set Driven Key" className="absolute left-[34px] top-[21px] w-[301px] bg-[#444444] shadow-[1px_2px_6px_rgba(0,0,0,0.6)]">
      <header className="h-[24px] flex items-center bg-white text-[#111111]">
        <span className="ml-[6px] w-3 text-[13px] leading-[14px] font-black text-[#168a8c]">M</span>
        <h1 className="ml-[4px] flex-1 text-[9px] leading-[14px] font-['Open_Sans',sans-serif]">Set Driven Key</h1>
        <button type="button" aria-label="Minimize" className="w-[35px] flex justify-center"><Minus size={12} strokeWidth={2} /></button>
        <button type="button" aria-label="Maximize" className="w-[35px] flex justify-center"><Square size={10} strokeWidth={3} /></button>
        <button type="button" aria-label="Close window" className="w-[35px] flex justify-center"><X size={14} strokeWidth={2} /></button>
      </header>
      <nav className="h-[16px] flex items-center gap-[11px] px-[6px] text-[9px] leading-[14px]">
        <a href="#load">Load</a>
        <a href="#opts">Options</a>
        <a href="#key">Key</a>
        <a href="#select">Select</a>
        <a href="#dhelp">Help</a>
      </nav>
      <div className="px-[6px] pt-[5px] pb-[9px] flex flex-col gap-2">
        <Section title="Driver">
          <Listbox label="Driver nodes" items={['CLAW_CONTROL']} selected={[0]} nodes />
          <Listbox label="Driver attributes" items={[...attrs, 'CLAW CONTROL']} selected={[10]} />
        </Section>
        <Section title="Driven">
          <Listbox label="Driven nodes" items={[node, node, node]} selected={[0]} focused nodes />
          <Listbox label="Driven attributes" items={attrs} selected={[4, 5, 6]} />
        </Section>
        <div className="grid grid-cols-[74fr_70fr_70fr_74fr] gap-px mt-[9px] text-[9px] leading-[18px] font-medium">
          <button type="button" className="h-[18px] bg-[#5d5d5d]">Key</button>
          <button type="button" className="h-[18px] bg-[#5d5d5d]">Load Driver</button>
          <button type="button" className="h-[18px] bg-[#5d5d5d]">Load Driven</button>
          <button type="button" className="h-[18px] bg-[#5d5d5d]">Close</button>
        </div>
      </div>
      <svg width="301" height="433" viewBox="34 21 301 433" className="absolute left-0 top-0 pointer-events-none">
        <g fill="none" stroke="#dd1717" strokeWidth="1.800" strokeLinecap="round">
          <path d="M44 267C60 262 80 264 100 261C130 260 165 261 176 265C184 269 187 275 181 279C170 286 130 288 100 286C75 284 52 282 44 278C38 274 39 268 47 265" />
          <path d="M267 306C240 304 210 306 182 306C170 308 177 324 182 333C188 346 200 346 220 343C232 337 247 340 249 326C250 318 249 312 249 305" />
        </g>
      </svg>
    </div>
  );
}

export default function App() {
  return (
    <div className="relative h-screen w-full flex flex-col overflow-hidden bg-[#373737] text-[#dcdcdc] font-['Noto_Sans_CJK_SC',sans-serif]">
      <Shelf />
      <div className="h-[14px] shrink-0 flex items-end bg-[#373737]">
        <span className="ml-[257px] w-[66px] h-3 bg-[#404040]" />
      </div>
      <div className="flex-1 min-h-0 flex">
        <Outliner />
        <main className="flex-1 min-w-0 flex flex-col bg-[#444444] overflow-hidden">
          <RenderView />
          <nav className="h-[14px] shrink-0 flex items-center gap-[11px] pl-[81px] text-[9px] leading-[14px]">
            <a href="#lighting">Lighting</a>
            <a href="#vshow">Show</a>
            <a href="#vrenderer">Renderer</a>
            <a href="#panels">Panels</a>
          </nav>
          <ViewportTools />
          <div className="flex-1 min-h-0 bg-[#5d5d5d]">
            <Scene />
          </div>
        </main>
      </div>
      <DrivenKeyDialog />
    </div>
  );
}
